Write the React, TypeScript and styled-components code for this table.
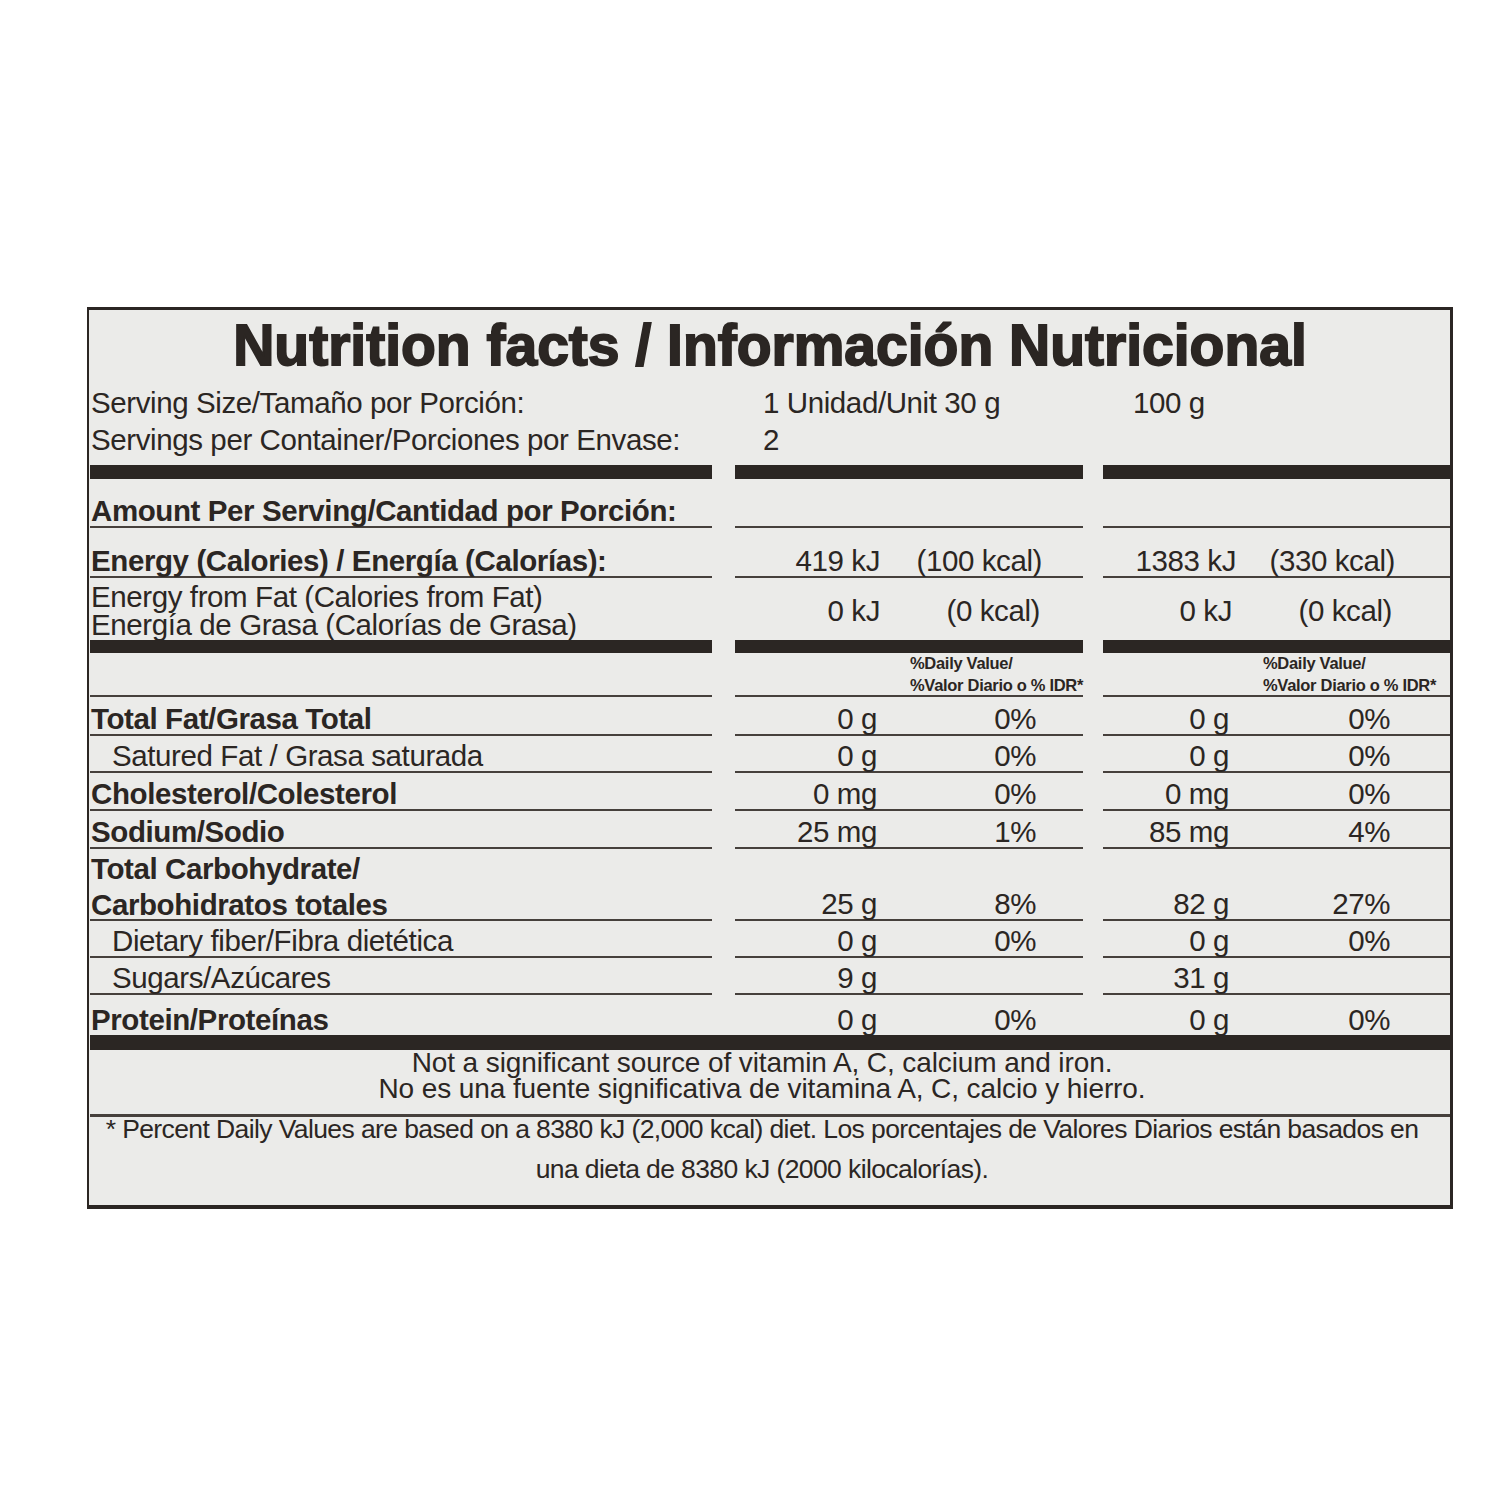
import styled, { createGlobalStyle } from "styled-components";

const INK = "#2b2623";
const RULE = "#46403c";

const GlobalStyle = createGlobalStyle`
  body {
    margin: 0;
    background: #ffffff;
    font-family: "Liberation Sans", Arial, sans-serif;
    color: ${INK};
  }
`;

type Pair = [string, string];

interface Nutrient {
  label: string[];
  bold?: boolean;
  indent?: boolean;
  a: Pair;
  b: Pair;
  h: number;
  last?: boolean;
}

const nutrients: Nutrient[] = [
  { label: ["Total Fat/Grasa Total"], bold: true, a: ["0 g", "0%"], b: ["0 g", "0%"], h: 39 },
  { label: ["Satured Fat / Grasa saturada"], indent: true, a: ["0 g", "0%"], b: ["0 g", "0%"], h: 37 },
  { label: ["Cholesterol/Colesterol"], bold: true, a: ["0 mg", "0%"], b: ["0 mg", "0%"], h: 38 },
  { label: ["Sodium/Sodio"], bold: true, a: ["25 mg", "1%"], b: ["85 mg", "4%"], h: 38 },
  {
    label: ["Total Carbohydrate/", "Carbohidratos totales"],
    bold: true,
    a: ["25 g", "8%"],
    b: ["82 g", "27%"],
    h: 72,
  },
  { label: ["Dietary fiber/Fibra dietética"], indent: true, a: ["0 g", "0%"], b: ["0 g", "0%"], h: 37 },
  { label: ["Sugars/Azúcares"], indent: true, a: ["9 g", ""], b: ["31 g", ""], h: 37 },
  { label: ["Protein/Proteínas"], bold: true, a: ["0 g", "0%"], b: ["0 g", "0%"], h: 40, last: true },
];

// widths of the amount / percent slots in each value column
const COL_A = { amount: 142, pct: 159 };
const COL_B = { amount: 126, pct: 161 };

const App = () => {
  return (
    <Page>
      <GlobalStyle />
      <Label>
        <Title>Nutrition facts / Información Nutricional</Title>

        <Row $h={40} $pt={6} $align="center">
          <LabelCell>Serving Size/Tamaño por Porción:</LabelCell>
          <ValueCell $col={3} $pad={28}>1 Unidad/Unit 30 g</ValueCell>
          <ValueCell $col={5} $pad={30}>100 g</ValueCell>
        </Row>
        <Row $h={45} $pt={5} $align="start">
          <LabelCell>Servings per Container/Porciones por Envase:</LabelCell>
          <ValueCell $col={3} $pad={28}>2</ValueCell>
        </Row>

        <Row $h={14}>
          <Bar $col={1} />
          <Bar $col={3} />
          <Bar $col={5} />
        </Row>

        <Row $h={49}>
          <LabelCell $bold $line>Amount Per Serving/Cantidad por Porción:</LabelCell>
          <ValueCell $col={3} $line />
          <ValueCell $col={5} $line />
        </Row>

        <Row $h={50}>
          <LabelCell $bold $line>Energy (Calories) / Energía (Calorías):</LabelCell>
          <ValueCell $col={3} $line>
            <Amount $w={145}>419 kJ</Amount>
            <Amount $w={162}>(100 kcal)</Amount>
          </ValueCell>
          <ValueCell $col={5} $line>
            <Amount $w={133}>1383 kJ</Amount>
            <Amount $w={159}>(330 kcal)</Amount>
          </ValueCell>
        </Row>

        <Row $h={62}>
          <LabelCell $tight>
            <div>
              Energy from Fat (Calories from Fat)
              <br />
              Energía de Grasa (Calorías de Grasa)
            </div>
          </LabelCell>
          <ValueCell $col={3} $center>
            <Amount $w={145}>0 kJ</Amount>
            <Amount $w={160}>(0 kcal)</Amount>
          </ValueCell>
          <ValueCell $col={5} $center>
            <Amount $w={129}>0 kJ</Amount>
            <Amount $w={160}>(0 kcal)</Amount>
          </ValueCell>
        </Row>

        <Row $h={13}>
          <Bar $col={1} />
          <Bar $col={3} />
          <Bar $col={5} />
        </Row>

        <Row $h={44}>
          <LabelCell $line />
          <ValueCell $col={3} $line $pad={175}>
            <DailyHead>
              %Daily Value/
              <br />
              %Valor Diario o % IDR*
            </DailyHead>
          </ValueCell>
          <ValueCell $col={5} $line $pad={160}>
            <DailyHead>
              %Daily Value/
              <br />
              %Valor Diario o % IDR*
            </DailyHead>
          </ValueCell>
        </Row>

        {nutrients.map((n) => (
          <Row $h={n.h} key={n.label.join(" ")}>
            <LabelCell $bold={n.bold} $indent={n.indent} $line={!n.last} $two={n.label.length > 1}>
              <div>
                {n.label.map((l, i) => (
                  <div key={i}>{l}</div>
                ))}
              </div>
            </LabelCell>
            <ValueCell $col={3} $line={!n.last}>
              <Amount $w={COL_A.amount}>{n.a[0]}</Amount>
              <Amount $w={COL_A.pct}>{n.a[1]}</Amount>
            </ValueCell>
            <ValueCell $col={5} $line={!n.last}>
              <Amount $w={COL_B.amount}>{n.b[0]}</Amount>
              <Amount $w={COL_B.pct}>{n.b[1]}</Amount>
            </ValueCell>
          </Row>
        ))}

        <FullBar />

        <Notes>
          <NoteLine>Not a significant source of vitamin A, C, calcium and iron.</NoteLine>
          <NoteLine>No es una fuente significativa de vitamina A, C, calcio y hierro.</NoteLine>
        </Notes>

        <Footnote>
          <FootLine>
            * Percent Daily Values are based on a 8380 kJ (2,000 kcal) diet. Los porcentajes de Valores Diarios están
            basados en
          </FootLine>
          <FootLine $second>una dieta de 8380 kJ (2000 kilocalorías).</FootLine>
        </Footnote>
      </Label>
    </Page>
  );
};

export default App;

const Page = styled.main`
  padding: 307px 0 0 87px;
  min-height: 1500px;
  box-sizing: border-box;
`;

const Label = styled.section`
  width: 1366px;
  box-sizing: border-box;
  border: 3px solid ${INK};
  border-left-width: 2px;
  border-bottom-width: 4px;
  padding-left: 1px;
  background: #ebebe9;
`;

const Title = styled.h1`
  margin: 0;
  height: 70px;
  display: flex;
  align-items: center;
  justify-content: center;
  font-size: 57px;
  font-weight: 700;
  letter-spacing: 0;
  -webkit-text-stroke: 1.8px ${INK};
  color: ${INK};
`;

const Row = styled.div<{ $h: number; $align?: string; $pt?: number }>`
  display: grid;
  grid-template-columns: 622px 23px 348px 20px 347px;
  grid-template-rows: 100%;
  box-sizing: border-box;
  height: ${(p) => p.$h}px;
  padding-top: ${(p) => p.$pt || 0}px;
  align-items: ${(p) => p.$align || "stretch"};
`;

const LabelCell = styled.div<{
  $bold?: boolean;
  $indent?: boolean;
  $line?: boolean;
  $tight?: boolean;
  $two?: boolean;
}>`
  grid-column: 1;
  display: flex;
  align-items: ${(p) => (p.$two ? "flex-start" : "flex-end")};
  box-sizing: border-box;
  min-height: 0;
  padding-left: ${(p) => (p.$indent ? 22 : 1)}px;
  padding-bottom: 1px;
  padding-top: ${(p) => (p.$two ? 2 : 0)}px;
  border-bottom: ${(p) => (p.$line ? `2px solid ${RULE}` : "none")};
  font-size: 29.5px;
  letter-spacing: -0.4px;
  font-weight: ${(p) => (p.$bold ? 700 : 400)};
  line-height: ${(p) => (p.$tight ? "28px" : p.$two ? "36px" : "1")};
  white-space: nowrap;
`;

const ValueCell = styled.div<{ $col: number; $line?: boolean; $pad?: number; $center?: boolean }>`
  grid-column: ${(p) => p.$col};
  display: flex;
  align-items: ${(p) => (p.$center ? "center" : "flex-end")};
  box-sizing: border-box;
  min-height: 0;
  padding-left: ${(p) => p.$pad || 0}px;
  padding-top: ${(p) => (p.$center ? 4 : 0)}px;
  padding-bottom: 1px;
  border-bottom: ${(p) => (p.$line ? `2px solid ${RULE}` : "none")};
  font-size: 29.5px;
  letter-spacing: -0.4px;
  line-height: 1;
  white-space: nowrap;
`;

const Amount = styled.span<{ $w: number }>`
  flex: none;
  width: ${(p) => p.$w}px;
  text-align: right;
`;

const DailyHead = styled.div`
  font-size: 16.5px;
  font-weight: 700;
  line-height: 22px;
  letter-spacing: -0.3px;
  margin-bottom: -2px;
`;

const Bar = styled.div<{ $col: number }>`
  grid-column: ${(p) => p.$col};
  background: ${INK};
`;

const FullBar = styled.div`
  height: 15px;
  background: ${INK};
`;

const Notes = styled.div`
  height: 67px;
  box-sizing: border-box;
  border-bottom: 3px solid ${RULE};
  padding-right: 16px;
  text-align: center;
  font-size: 28px;
  letter-spacing: -0.1px;
  line-height: 26px;
`;

const NoteLine = styled.div``;

const Footnote = styled.div`
  height: 88px;
  box-sizing: border-box;
  padding-right: 16px;
  text-align: center;
  font-size: 26.5px;
  letter-spacing: -0.6px;
`;

const FootLine = styled.div<{ $second?: boolean }>`
  line-height: 24px;
  margin-top: ${(p) => (p.$second ? 16 : 0)}px;
  white-space: nowrap;
`;
